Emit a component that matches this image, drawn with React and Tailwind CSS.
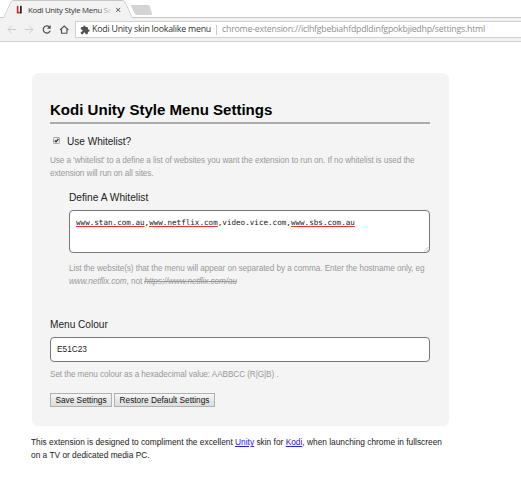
import React from "react";

function TabStrip() {
  return (
    <div className="h-[18px] w-full flex relative bg-white">
      <svg className="absolute left-0 top-0" width="521" height="19" viewBox="0 0 521 19" fill="none">
        <path d="M0 17.5H4L11 2Q12 .5 14 .5H122Q124 .5 125 2L132 17.5H521" stroke="#c6c6c6" />
        <path d="M4 18L11.5 2Q12 1 14 1H122Q124 1 124.5 2L132 18V19H4Z" fill="#f2f2f2" />
        <path d="M131.500 5H148Q149 5 149.700 6L152 13.500Q152.400 15 151 15H136.500Q135.500 15 135 14L131 6Q130.700 5 131.500 5Z" fill="#d4d4d4" />
        <rect x="16" y="5" width="6.500" height="8.500" fill="#fff" />
        <path d="M17.600 5.800V12.600H19.300" stroke="#dd2020" strokeWidth="1.700" />
        <path d="M20.900 5.800V12.600H19.500" stroke="#222" strokeWidth="1.700" />
        <path d="M116.200 7.900l4 4M120.200 7.900L116.200 11.900" stroke="#555" strokeWidth="1" />
      </svg>
      <div className="relative ml-[28px] mt-[3px] w-[84px] whitespace-nowrap font-['Open_Sans','Noto_Sans',sans-serif] text-[7.8px] leading-[14px] tracking-[-0.27px] text-[#333]">
        Kodi Unity Style Menu Se
        <div className="absolute right-0 top-0 h-full w-[14px] bg-linear-to-r from-transparent to-[#f2f2f2]" />
      </div>
    </div>
  );
}

function Toolbar() {
  return (
    <div className="flex h-[24px] w-full items-start border-b border-[#d2d2d2] bg-[#f2f2f2] pt-[3px]">
      <svg className="shrink-0" width="75" height="17" viewBox="0 0 75 17" fill="none" strokeWidth="1">
        <path d="M16 8.500H8M11.800 4.700L8 8.500l3.800 3.800" stroke="#cbcbcb" />
        <path d="M25 8.500h8M29.200 4.700L33 8.500l-3.800 3.800" stroke="#cbcbcb" />
        <path d="M49.500 6A3.600 3.600 0 1 0 50.200 9.800" stroke="#505050" strokeWidth="1.200" />
        <path d="M50.700 4V7.800H46.900Z" fill="#505050" />
        <path d="M60 9L64.200 5L68.400 9M61.500 8.300V12.200H66.900V8.300" stroke="#505050" strokeWidth="1.100" />
      </svg>
      <div className="flex h-[17px] min-w-0 flex-1 items-center whitespace-nowrap border-y border-l border-[#d0d0d0] bg-white pl-[4px] font-['Open_Sans','Noto_Sans',sans-serif] text-[8.8px] leading-[15px]">
        <svg width="10" height="10" viewBox="0 0 24 24" fill="#505050">
          <path d="M20.500 11H19V7a2 2 0 0 0-2-2h-4V3.500a2.500 2.500 0 0 0-5 0V5H4a2 2 0 0 0-2 2v3.800h1.500a2.700 2.700 0 0 1 0 5.400H2V20a2 2 0 0 0 2 2h3.800v-1.500a2.700 2.700 0 0 1 5.400 0V22H17a2 2 0 0 0 2-2v-4h1.500a2.500 2.500 0 0 0 0-5z" />
        </svg>
        <span className="ml-[2px] w-[119px] tracking-[-0.22px] text-[#333]">Kodi Unity skin lookalike menu</span>
        <span className="ml-[5px] h-[10px] w-px bg-[#ccc]" />
        <span className="ml-[5px] tracking-[-0.23px] text-[#909090]">chrome-extension://iclhfgbebiahfdpdldinfgpokbjiedhp/settings.html</span>
      </div>
    </div>
  );
}

function Help({ children }) {
  return <p className="whitespace-nowrap text-[8.2px] tracking-[-0.078px] leading-[13px] text-[#999]">{children}</p>;
}

function Misspelt({ children }) {
  return <span className="underline decoration-[#f03030] decoration-[1px] underline-offset-[1px]">{children}</span>;
}

function Button({ children, className }) {
  return (
    <button className={"h-[14px] whitespace-nowrap border border-[#b0b0b0] bg-linear-to-b from-[#f6f6f6] to-[#dddddd] text-center text-[8.3px] leading-[12px] text-[#111] " + className}>
      {children}
    </button>
  );
}

export default function App() {
  return (
    <div className="h-[496px] w-[521px] overflow-hidden bg-white font-['Liberation_Sans',Arial,sans-serif]">
      <TabStrip />
      <Toolbar />
      <main className="ml-[32px] mt-[31px] h-[353px] w-[417px] rounded-[6px] bg-[#f4f4f4] pl-[18px] pr-[19px] pt-[27px]">
        <h1 className="h-[22px] whitespace-nowrap text-[15.05px] font-bold leading-[20px] text-black">Kodi Unity Style Menu Settings</h1>
        <div className="h-[2px] bg-[#aaacaa]" />
        <div className="mt-[11px] flex h-[14px] items-start pl-[3px]">
          <svg className="mt-[2px]" width="7" height="7" viewBox="0 0 7 7" fill="none">
            <rect x=".5" y=".5" width="6" height="6" rx=".6" fill="#eee" stroke="#aaa" />
            <path d="M1.700 3.500L3 4.900L5.400 1.800" stroke="#222" strokeWidth="1.200" />
          </svg>
          <label className="ml-[7px] whitespace-nowrap text-[10.05px] leading-[14px] text-[#222]">Use Whitelist?</label>
        </div>
        <div className="mt-[5px]">
          <Help>Use a 'whitelist' to a define a list of websites you want the extension to run on. If no whitelist is used the</Help>
          <Help>extension will run on all sites.</Help>
        </div>
        <section className="ml-[19px] mt-[11px]">
          <h2 className="whitespace-nowrap text-[10.2px] leading-[14px] text-[#222]">Define A Whitelist</h2>
          <div className="relative mt-[5px] h-[43px] rounded-[4px] border border-[#777] bg-white pl-[6px] pt-[6px] font-['DejaVu_Sans_Mono',monospace] text-[7.6px] leading-[12px] text-[#222]">
            <div className="whitespace-nowrap">
              <Misspelt>www.stan.com.au</Misspelt>,<Misspelt>www.netflix.com</Misspelt>,video.vice.com,<Misspelt>www.sbs.com.au</Misspelt>
            </div>
            <svg className="absolute bottom-0 right-0" width="5" height="5" viewBox="0 0 5 5" stroke="#999" strokeWidth=".6">
              <path d="M0 4.500L4.500 0M2.500 4.500L4.500 2.500" />
            </svg>
          </div>
          <div className="mt-[9px]">
            <Help>List the website(s) that the menu will appear on separated by a comma. Enter the hostname only, eg</Help>
            <Help><i>www.netflix.com</i>, not <i className="line-through">https://www.netflix.com/au</i></Help>
          </div>
        </section>
        <section className="mt-[30px]">
          <h2 className="whitespace-nowrap text-[10.1px] leading-[14px] text-[#222]">Menu Colour</h2>
          <div className="mt-[5px] h-[25px] rounded-[4px] border border-[#777] bg-white pl-[6px] text-[8.300px] leading-[23px] text-[#222]">E51C23</div>
          <div className="mt-[6px]">
            <Help>Set the menu colour as a hexadecimal value: AABBCC (R|G|B) .</Help>
          </div>
        </section>
        <div className="mt-[12px] flex gap-[2px]">
          <Button className="w-[62px]">Save Settings</Button>
          <Button className="w-[101px]">Restore Default Settings</Button>
        </div>
      </main>
      <footer className="ml-[31px] mt-[10px] whitespace-nowrap text-[8.35px] leading-[13px] text-[#222]">
        <p>This extension is designed to compliment the excellent <a className="text-[#2020ee] underline">Unity</a> skin for <a className="text-[#2020ee] underline">Kodi</a>, when launching chrome in fullscreen</p>
        <p>on a TV or dedicated media PC.</p>
      </footer>
    </div>
  );
}
